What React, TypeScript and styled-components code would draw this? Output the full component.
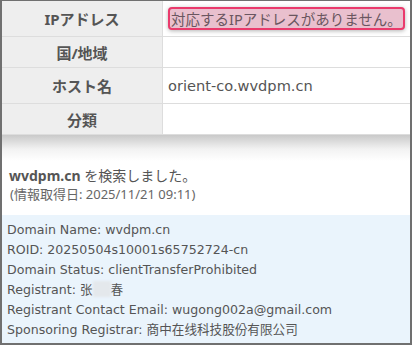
import React from "react";
import styled, { createGlobalStyle } from "styled-components";

const Global = createGlobalStyle`
  html, body { margin: 0; padding: 0; background: #fff; }
  body { font-family: "DejaVu Sans", "Noto Sans CJK JP", sans-serif; }
`;

const Frame = styled.div`
  width: 412px;
  height: 345px;
  box-sizing: border-box;
  border: 2px solid #707070;
  border-top-width: 1px;
  overflow: hidden;
  background: #fff;
  display: flex;
  flex-direction: column;
`;

const Table = styled.div`
  display: grid;
  grid-template-columns: 161px 1fr;
`;

const Label = styled.div<{ $h: number }>`
  box-sizing: border-box;
  height: ${(p) => p.$h}px;
  background: #eeeeee;
  border-bottom: 1px solid #dddddd;
  border-right: 1px solid #dddddd;
  display: flex;
  align-items: center;
  justify-content: center;
  font-family: "Noto Sans", "Noto Sans CJK JP", sans-serif;
  font-weight: 700;
  font-size: 15px;
  color: #555;
`;

const Value = styled.div<{ $h: number }>`
  box-sizing: border-box;
  height: ${(p) => p.$h}px;
  border-bottom: 1px solid #dddddd;
  display: flex;
  align-items: center;
  padding-left: 5px;
  font-size: 14.6px;
  color: #555;
`;

const Alert = styled.span`
  background: #e9c0ce;
  border: 2px solid #ea3a6c;
  border-radius: 4px;
  box-shadow: 0 1px 4px rgba(0, 0, 0, 0.3);
  padding: 1px 1px 0;
  font-family: "Noto Sans", "Noto Sans CJK JP", sans-serif;
  font-size: 14.5px;
  line-height: 18px;
  color: #6a5660;
  white-space: nowrap;
`;

const Heading = styled.div`
  background: linear-gradient(#c9c9c9 0px, #f2f2f2 14px, #ffffff 26px);
  padding: 31px 0 0 7px;
  height: 80px;
  box-sizing: border-box;
  font-family: "Noto Sans", "Noto Sans CJK JP", sans-serif;
`;

const Title = styled.div`
  font-size: 14px;
  font-weight: 700;
  color: #555;
  line-height: 19px;
  span { font-weight: 400; }
`;

const Sub = styled.div`
  font-size: 13px;
  color: #666;
  line-height: 18px;
  margin-left: 1px;
`;

const Whois = styled.div`
  flex: 1;
  background: #eaf4fc;
  padding: 5px 0 0 5px;
  font-size: 12.6px;
  line-height: 20px;
  color: #555;
`;

const Blur = styled.span`
  display: inline-block;
  width: 18px;
  height: 16px;
  vertical-align: -3px;
  background: #e4e8ec;
  filter: blur(1px);
`;

const rows: [string, React.ReactNode, number][] = [
  ["IPアドレス", <Alert>対応するIPアドレスがありません。</Alert>, 36],
  ["国/地域", "", 31],
  ["ホスト名", "orient-co.wvdpm.cn", 36],
  ["分類", "", 31],
];

export default function App() {
  return (
    <>
      <Global />
      <Frame>
        <Table>
          {rows.map(([l, v, h]) => (
            <React.Fragment key={l}>
              <Label $h={h}>{l}</Label>
              <Value $h={h}>{v}</Value>
            </React.Fragment>
          ))}
        </Table>
        <Heading>
          <Title>
            wvdpm.cn <span>を検索しました。</span>
          </Title>
          <Sub>(情報取得日: 2025/11/21 09:11)</Sub>
        </Heading>
        <Whois>
          <div>Domain Name: wvdpm.cn</div>
          <div>ROID: 20250504s10001s65752724-cn</div>
          <div>Domain Status: clientTransferProhibited</div>
          <div>
            Registrant: 张<Blur />春
          </div>
          <div>Registrant Contact Email: wugong002a@gmail.com</div>
          <div>Sponsoring Registrar: 商中在线科技股份有限公司</div>
        </Whois>
      </Frame>
    </>
  );
}
